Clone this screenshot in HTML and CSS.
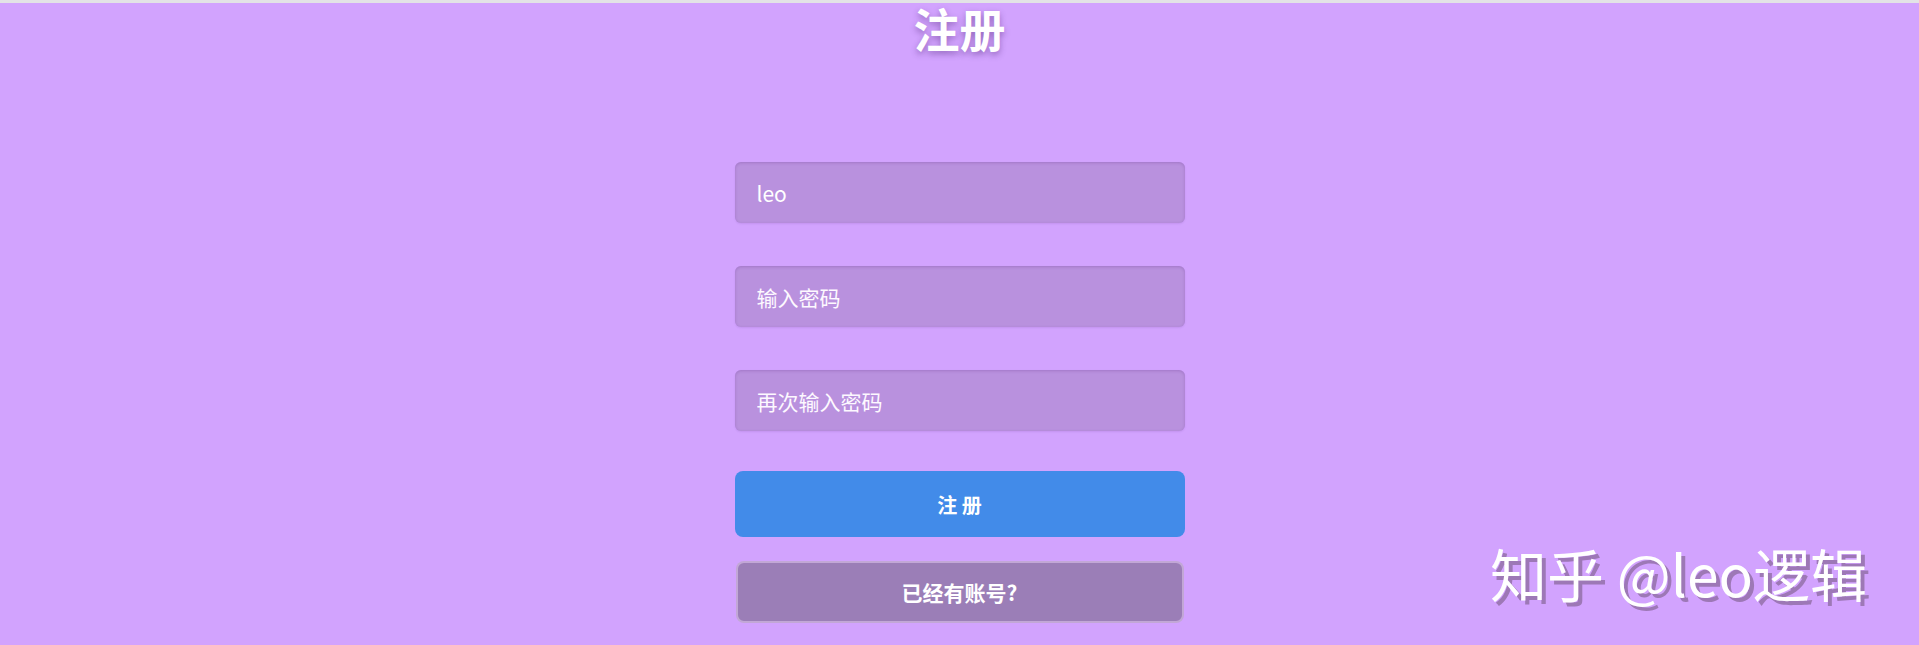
FILE: index.html
```html
<!DOCTYPE html>
<html lang="zh">
<head>
<meta charset="utf-8">
<title>注册</title>
<link rel="stylesheet" href="styles.css">
</head>
<body>
<div class="topbar"></div>
<main class="page">
  <h1 class="title">注册</h1>
  <form class="form">
    <input class="field" type="text" value="leo">
    <input class="field" type="password" placeholder="输入密码">
    <input class="field" type="password" placeholder="再次输入密码">
    <button class="btn btn-primary" type="button">注 册</button>
    <button class="btn btn-secondary" type="button">已经有账号?</button>
  </form>
</main>
<div class="watermark">知乎 @leo逻辑</div>
</body>
</html>
```

FILE: styles.css
```css
html, body {
  margin: 0;
  padding: 0;
  height: 100%;
}
body {
  background: #d2a3fe;
  font-family: "Noto Sans CJK SC", "Noto Sans", sans-serif;
  overflow: hidden;
  position: relative;
}
.topbar {
  height: 3px;
  background: #e3e3e6;
}
.page {
  display: flex;
  flex-direction: column;
  align-items: center;
}
.title {
  margin: 0;
  font-size: 46px;
  line-height: 48px;
  font-weight: 700;
  color: #ffffff;
  text-shadow: 0 3px 6px rgba(80, 40, 120, 0.45);
}
.form {
  width: 450px;
  margin-top: 111px;
  display: flex;
  flex-direction: column;
}
.field {
  box-sizing: border-box;
  height: 61px;
  margin: 0 0 43px 0;
  padding: 0 22px;
  border: none;
  border-radius: 6px;
  background: #b991de;
  color: #ffffff;
  font-family: "Noto Sans CJK SC", "Noto Sans", sans-serif;
  font-size: 21px;
  outline: none;
  box-shadow: inset 0 1px 3px rgba(90, 40, 130, 0.25), 0 1px 2px rgba(90, 40, 130, 0.12);
}
.field:nth-of-type(3) {
  margin-bottom: 40px;
}
.field::placeholder {
  color: #fdf9ff;
  opacity: 1;
}
.btn {
  box-sizing: border-box;
  border-radius: 8px;
  font-family: "Noto Sans CJK SC", "Noto Sans", sans-serif;
  font-weight: 700;
  color: #ffffff;
  cursor: pointer;
}
.btn-primary {
  height: 66px;
  border: none;
  background: #428be9;
  margin-bottom: 24px;
  font-size: 20px;
}
.btn-secondary {
  height: 62px;
  width: 448px;
  align-self: center;
  border: 2px solid rgba(225, 200, 240, 0.55);
  background: #9b7eb7;
  font-size: 21px;
}
.watermark {
  position: absolute;
  right: 52px;
  bottom: 44px;
  font-size: 57px;
  line-height: 1;
  color: #ffffff;
  text-shadow: 4px 4px 0 #9d78b6;
  white-space: nowrap;
}
```
